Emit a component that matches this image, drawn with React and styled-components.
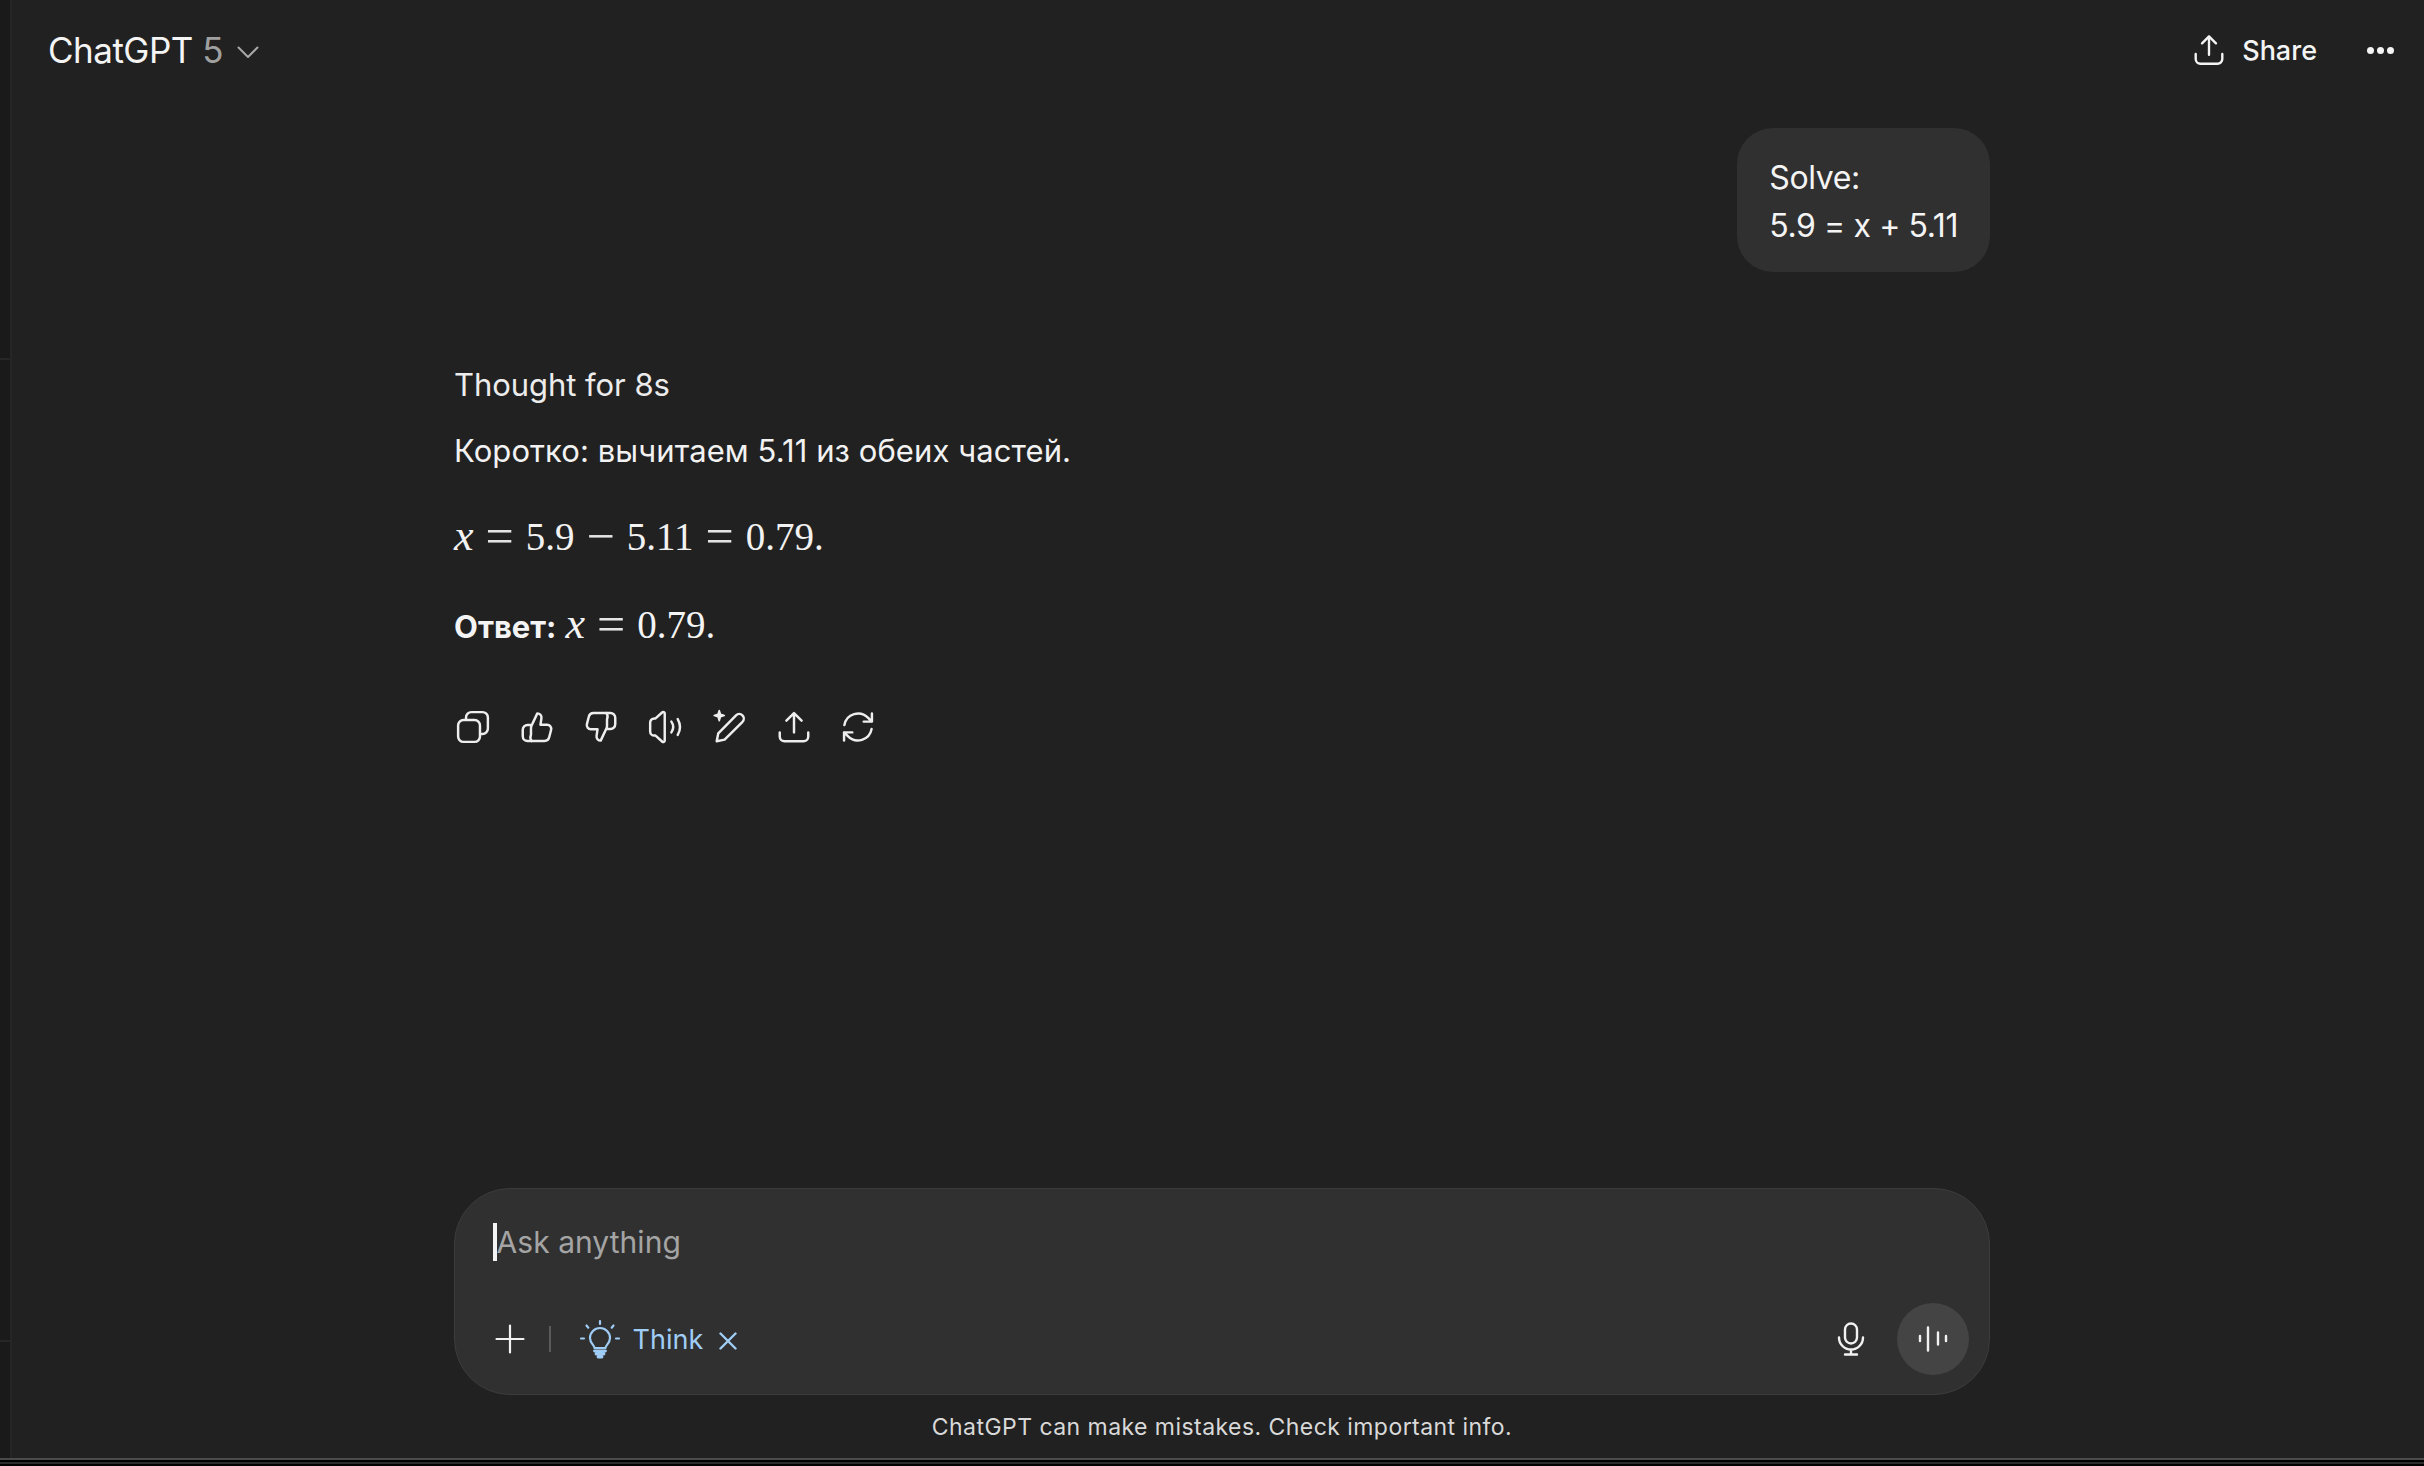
import React from "react";
import styled, { createGlobalStyle } from "styled-components";

const GlobalStyle = createGlobalStyle`
	html, body {
		margin: 0;
		padding: 0;
		background: #212121;
	}
	body {
		font-family: Inter, "Liberation Sans", sans-serif;
		color: #ececec;
	}
`;

function Stroke({ size = 36, width = 2, color = "currentColor", children }) {
	return (
		<svg width={size} height={size} viewBox="0 0 24 24" fill="none" stroke={color} strokeWidth={width} strokeLinecap="round" strokeLinejoin="round">
			{children}
		</svg>
	);
}

function ShareIcon({ size }) {
	return (
		<Stroke size={size} width={1.5}>
			<path d="M12 15V3.5M7.6 7.8 12 3.4l4.4 4.4" />
			<path d="M3.6 14.5v3.2a3 3 0 0 0 3 3h10.8a3 3 0 0 0 3-3v-3.2" />
		</Stroke>
	);
}

const actions = [
	<>
		<rect x="2.6" y="7.6" width="13.8" height="13.8" rx="3.4" />
		<path d="M7.6 7.4V6a3.4 3.4 0 0 1 3.4-3.4h7A3.4 3.4 0 0 1 21.4 6v7a3.4 3.4 0 0 1-3.4 3.4h-1.4" />
	</>,
	<>
		<path d="M8.6 20.8h8.2a3 3 0 0 0 2.9-2.3l1.2-4.7a2.6 2.6 0 0 0-2.5-3.2h-4.2l.6-4.2a2.6 2.6 0 0 0-2.6-3l-3.6 7.6a4 4 0 0 0-.4 1.7v4.2a3.9 3.9 0 0 0 .4 3.9Z" />
		<path d="M8.6 20.8H6a3 3 0 0 1-3-3v-4a3 3 0 0 1 3-3h2" />
	</>,
	<>
		<path d="M15.4 3.2H7.2a3 3 0 0 0-2.9 2.3L3.1 10.2a2.6 2.6 0 0 0 2.5 3.2h4.2l-.6 4.2a2.6 2.6 0 0 0 2.6 3l3.6-7.6a4 4 0 0 0 .4-1.7V7.1a3.9 3.9 0 0 0-.4-3.9Z" />
		<path d="M15.4 3.2H18a3 3 0 0 1 3 3v4a3 3 0 0 1-3 3h-2" />
	</>,
	<>
		<path d="M11.2 3.4v17.2c0 .8-.9 1.2-1.5.7L5.4 17.4H4.6A2.6 2.6 0 0 1 2 14.8V9.2a2.6 2.6 0 0 1 2.6-2.6h.8l4.3-3.9c.6-.5 1.5-.1 1.5.7Z" />
		<path d="M15.4 8.6a6 6 0 0 1 0 6.8M19.4 7a10 10 0 0 1 0 10" />
	</>,
	<>
		<path d="M3.6 21 4.6 16 15.8 4.6a2.9 2.9 0 0 1 4.1 4.1L8.6 20l-5 1Z" />
		<path d="M5.2 1.6 6 4l2.4.8L6 5.6l-.8 2.4-.8-2.4L2 4.8l2.4-.8Z" fill="currentColor" strokeWidth="1" />
	</>,
	<>
		<path d="M12 15.4V3.4M7.2 8 12 3.2 16.8 8" />
		<path d="M3 15.4V18a3 3 0 0 0 3 3h12a3 3 0 0 0 3-3v-2.6" />
	</>,
	<>
		<path d="M3.4 10.8A8.8 8.8 0 0 1 18.4 6.2L20.8 8.6M20.8 3.4v5.2h-5.2" />
		<path d="M20.6 13.2A8.8 8.8 0 0 1 5.6 17.8L3.2 15.4M3.2 20.6v-5.2h5.2" />
	</>,
];

export default function App() {
	return (
		<>
			<GlobalStyle />
			<Screen>
				<Body>
					<Rail>
						<RailNotch $top={358} />
						<RailNotch $top={1340} />
					</Rail>
					<Main>
						<Header>
							<ModelPicker>
								ChatGPT <ModelVersion>5</ModelVersion>
								<svg width="22" height="14" viewBox="0 0 22 14" fill="none" stroke="#a8a8a8" strokeWidth="2" strokeLinecap="round" strokeLinejoin="round">
									<path d="M1.5 2.5 11 12l9.5-9.5" />
								</svg>
							</ModelPicker>
							<HeaderActions>
								<ShareButton>
									<ShareIcon size={38} />
									Share
								</ShareButton>
								<MoreButton>
									<Dot />
									<Dot />
									<Dot />
								</MoreButton>
							</HeaderActions>
						</Header>

						<Thread>
							<UserRow>
								<UserBubble>
									Solve:
									<br />
									5.9 = x + 5.11
								</UserBubble>
							</UserRow>

							<Thought>Thought for 8s</Thought>
							<Paragraph>Коротко: вычитаем 5.11 из обеих частей.</Paragraph>
							<DisplayMath>
								<MathVar>x</MathVar>
								<MathOp>=</MathOp>5.9<MathOp>−</MathOp>5.11<MathOp>=</MathOp>0.79.
							</DisplayMath>
							<AnswerLine>
								<strong>Ответ:</strong>
								<InlineMath>
									<MathVar>x</MathVar>
									<MathOp>=</MathOp>0.79.
								</InlineMath>
							</AnswerLine>

							<ActionRow>
								{actions.map((icon, i) => (
									<ActionButton key={i}>
										<Stroke size={38} width={1.55}>
											{icon}
										</Stroke>
									</ActionButton>
								))}
							</ActionRow>
						</Thread>

						<Composer>
							<Placeholder>Ask anything</Placeholder>
							<ComposerBar>
								<ToolGroup>
									<svg width="30" height="30" viewBox="0 0 30 30" stroke="#f2f2f2" strokeWidth="2.2" strokeLinecap="round">
										<path d="M15 1.5v27M1.5 15h27" />
									</svg>
									<ToolDivider />
									<ThinkChip>
										<svg width="42" height="40" viewBox="0 0 42 40" fill="none" stroke="#9fcdf5" strokeWidth="2.2" strokeLinecap="round" strokeLinejoin="round">
											<path d="M21 2v3M7.5 6.5l1.8 2.2M34.5 6.5l-1.8 2.2M2 19.5h3M37 19.5h3" />
											<path d="M15.5 29c0-3-4.5-4.5-4.5-10a10 10 0 0 1 20 0c0 5.5-4.5 7-4.5 10Z" />
											<path d="M15.5 32h11M17 35h8M19 38h4" strokeWidth="2.8" />
										</svg>
										Think
										<svg width="18" height="18" viewBox="0 0 18 18" stroke="#9fcdf5" strokeWidth="2.4" strokeLinecap="round">
											<path d="m1.5 1.5 15 15M16.5 1.5l-15 15" />
										</svg>
									</ThinkChip>
								</ToolGroup>
								<ToolGroup>
									<svg width="28" height="34" viewBox="0 0 28 34" fill="none" stroke="#f2f2f2" strokeWidth="2.4" strokeLinecap="round" strokeLinejoin="round">
										<rect x="8" y="1.5" width="12" height="20" rx="6" />
										<path d="M2 15.5a12 12 0 0 0 24 0M14 27.5v5M8 32.5h12" />
									</svg>
									<VoiceButton>
										<svg width="30" height="26" viewBox="0 0 30 26" stroke="#f2f2f2" strokeWidth="2.4" strokeLinecap="round">
											<path d="M2 10v5M10 1.5v23M20 6.5v12M28 10v5" />
										</svg>
									</VoiceButton>
								</ToolGroup>
							</ComposerBar>
						</Composer>
						<Disclaimer>ChatGPT can make mistakes. Check important info.</Disclaimer>
					</Main>
				</Body>
				<BottomEdge />
			</Screen>
		</>
	);
}

const Screen = styled.div`
	width: 2424px;
	height: 1466px;
	display: flex;
	flex-direction: column;
	overflow: hidden;
	background: #212121;
`;

const Body = styled.div`
	flex: 1;
	display: flex;
	min-height: 0;
`;

const Rail = styled.div`
	position: relative;
	width: 10px;
	flex: none;
	background: #1a1a1a;
	border-right: 2px solid #262626;
`;

const RailNotch = styled.div`
	position: absolute;
	left: 0;
	right: 0;
	top: ${(p) => p.$top}px;
	height: 2px;
	background: #262626;
`;

const Main = styled.main`
	flex: 1;
	min-width: 0;
	display: flex;
	flex-direction: column;
	align-items: center;
	padding-left: 8px;
`;

const Header = styled.header`
	align-self: stretch;
	margin-left: -8px;
	height: 100px;
	flex: none;
	display: flex;
	align-items: center;
	justify-content: space-between;
	padding: 0 30px 0 36px;
`;

const ModelPicker = styled.div`
	display: flex;
	align-items: center;
	font-size: 35px;
	letter-spacing: -0.5px;
	color: #f4f4f4;
	white-space: pre;

	svg {
		margin-left: 14px;
		margin-top: 4px;
	}
`;

const ModelVersion = styled.span`
	color: #a0a0a0;
`;

const HeaderActions = styled.div`
	display: flex;
	align-items: center;
	gap: 50px;
`;

const ShareButton = styled.div`
	display: flex;
	align-items: center;
	gap: 14px;
	font-size: 27px;
	font-weight: 500;
	color: #f4f4f4;
`;

const MoreButton = styled.div`
	display: flex;
	align-items: center;
	gap: 3px;
`;

const Dot = styled.span`
	width: 7px;
	height: 7px;
	border-radius: 50%;
	background: #f4f4f4;
`;

const Thread = styled.div`
	width: 1536px;
	flex: 1;
	min-height: 0;
	display: flex;
	flex-direction: column;
	padding-top: 28px;
`;

const UserRow = styled.div`
	display: flex;
	justify-content: flex-end;
`;

const UserBubble = styled.div`
	background: #303030;
	border-radius: 36px;
	padding: 26px 32px 22px;
	font-size: 32px;
	line-height: 48px;
	letter-spacing: -0.4px;
	color: #f4f4f4;
`;

const Thought = styled.div`
	margin-top: 90px;
	font-size: 31px;
	line-height: 46px;
	letter-spacing: -0.05px;
	color: #ececec;
`;

const Paragraph = styled.div`
	margin-top: 20px;
	font-size: 31px;
	line-height: 46px;
	letter-spacing: 0.08px;
	color: #f2f2f2;
`;

const DisplayMath = styled.div`
	margin-top: 38px;
	font-family: "Liberation Serif", serif;
	font-size: 39px;
	line-height: 50px;
	color: #f2f2f2;
`;

const MathVar = styled.i`
	font-style: italic;
	font-size: 44px;
	line-height: 0;
`;

const MathOp = styled.span`
	font-size: 50px;
	line-height: 0;
	vertical-align: -3px;
	margin: 0 12px;
	color: #e4e4e4;
`;

const AnswerLine = styled.div`
	margin-top: 38px;
	display: flex;
	align-items: baseline;
	gap: 9px;
	font-size: 31px;
	line-height: 50px;
	color: #f4f4f4;

	strong {
		font-weight: 700;
	}
`;

const InlineMath = styled.span`
	font-family: "Liberation Serif", serif;
	font-size: 39px;
`;

const ActionRow = styled.div`
	display: flex;
	margin-top: 55px;
	margin-left: -13px;
`;

const ActionButton = styled.div`
	width: 64.2px;
	height: 40px;
	display: flex;
	align-items: center;
	justify-content: center;
	color: #eeeeee;
`;

const Composer = styled.div`
	width: 1536px;
	height: 207px;
	flex: none;
	box-sizing: border-box;
	background: #303030;
	border: 1.5px solid #3c3c3c;
	border-radius: 56px;
	padding: 34px 20px 19px 40px;
	display: flex;
	flex-direction: column;
	justify-content: space-between;
`;

const Placeholder = styled.div`
	font-size: 30px;
	line-height: 38px;
	letter-spacing: 0.05px;
	color: #a4a4a4;
	border-left: 4px solid #f4f4f4;
	margin-left: -2.5px;
	width: fit-content;
`;

const ComposerBar = styled.div`
	display: flex;
	align-items: center;
	justify-content: space-between;
`;

const ToolGroup = styled.div`
	display: flex;
	align-items: center;
	gap: 32px;
`;

const ToolDivider = styled.div`
	width: 1.5px;
	height: 26px;
	background: #5a5a5a;
	margin-left: -8px;
`;

const ThinkChip = styled.div`
	display: flex;
	align-items: center;
	gap: 12px;
	margin-left: -4px;
	font-size: 27px;
	color: #9fcdf5;

	svg:last-child {
		margin-left: 4px;
		margin-top: 4px;
	}
`;

const VoiceButton = styled.div`
	width: 72px;
	height: 72px;
	border-radius: 50%;
	background: #444444;
	display: flex;
	align-items: center;
	justify-content: center;
`;

const Disclaimer = styled.div`
	flex: none;
	height: 63px;
	line-height: 65px;
	font-size: 23px;
	letter-spacing: 0.45px;
	color: #d9d9d9;
`;

const BottomEdge = styled.div`
	height: 8px;
	flex: none;
	background: linear-gradient(#4a4a4a 0 2px, #000000 2px 4px, #2c2c2c 4px 6px, #000000 6px);
`;
